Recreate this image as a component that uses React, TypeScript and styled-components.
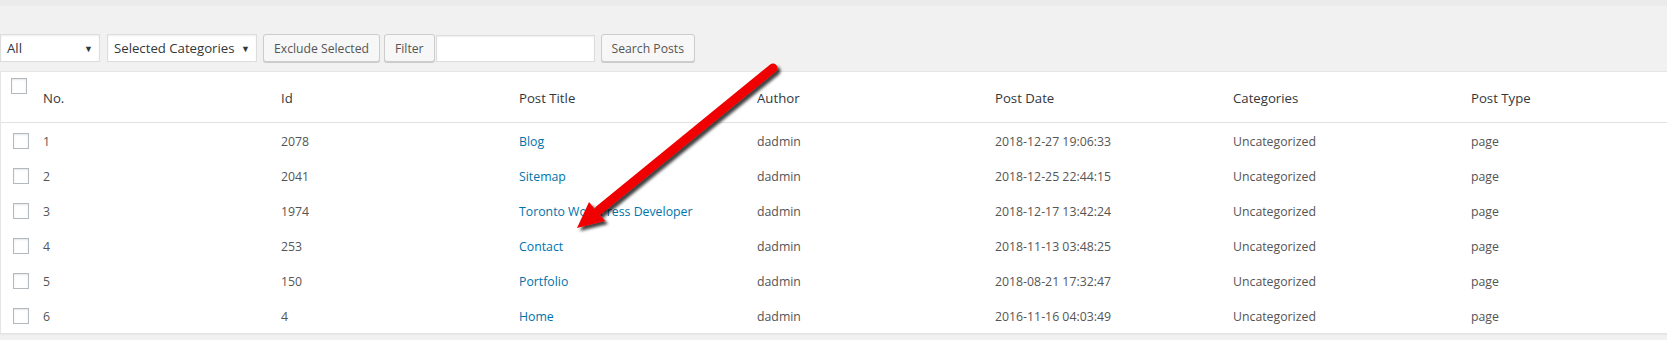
import React from 'react'
import styled, { createGlobalStyle } from 'styled-components'

const GlobalStyle = createGlobalStyle`
  body {
    margin: 0;
    background: #f1f1f1;
    font-family: "Open Sans", "Noto Sans", sans-serif;
    color: #32373c;
  }
`

interface Post {
  id: number
  title: string
  author: string
  date: string
  category: string
  type: string
}

const posts: Post[] = [
  { id: 2078, title: 'Blog', author: 'dadmin', date: '2018-12-27 19:06:33', category: 'Uncategorized', type: 'page' },
  { id: 2041, title: 'Sitemap', author: 'dadmin', date: '2018-12-25 22:44:15', category: 'Uncategorized', type: 'page' },
  { id: 1974, title: 'Toronto WordPress Developer', author: 'dadmin', date: '2018-12-17 13:42:24', category: 'Uncategorized', type: 'page' },
  { id: 253, title: 'Contact', author: 'dadmin', date: '2018-11-13 03:48:25', category: 'Uncategorized', type: 'page' },
  { id: 150, title: 'Portfolio', author: 'dadmin', date: '2018-08-21 17:32:47', category: 'Uncategorized', type: 'page' },
  { id: 4, title: 'Home', author: 'dadmin', date: '2016-11-16 04:03:49', category: 'Uncategorized', type: 'page' },
]

const columns = ['No.', 'Id', 'Post Title', 'Author', 'Post Date', 'Categories', 'Post Type']

const Arrow: React.FC = () => (
  <ArrowLayer width="1667" height="340" viewBox="0 0 1667 340">
    <defs>
      <filter id="arrowShadow" x="-20%" y="-20%" width="140%" height="140%">
        <feDropShadow dx="3" dy="3" stdDeviation="1.6" floodColor="#000" floodOpacity="0.75" />
      </filter>
    </defs>
    <g filter="url(#arrowShadow)">
      <line x1="773" y1="68" x2="599" y2="210" stroke="#f00000" strokeWidth="9" strokeLinecap="round" />
      <polygon points="577,228 605,221 589,202" fill="#f00000" />
    </g>
  </ArrowLayer>
)

const App: React.FC = () => {
  return (
    <Page>
      <GlobalStyle />
      <TopStrip />
      <Toolbar>
        <Select width={100}>
          All
          <Caret>▼</Caret>
        </Select>
        <Select width={150}>
          Selected Categories
          <Caret>▼</Caret>
        </Select>
        <Button>Exclude Selected</Button>
        <SearchGroup>
          <Button>Filter</Button>
          <SearchInput />
        </SearchGroup>
        <Button>Search Posts</Button>
      </Toolbar>
      <Table>
        <HeaderRow>
          <CheckCell header>
            <Checkbox />
          </CheckCell>
          {columns.map((c) => (
            <HeadCell key={c}>{c}</HeadCell>
          ))}
        </HeaderRow>
        {posts.map((p, index) => (
          <Row key={p.id}>
            <CheckCell>
              <Checkbox />
            </CheckCell>
            <Cell>{index + 1}</Cell>
            <Cell>{p.id}</Cell>
            <Cell>
              <TitleLink>{p.title}</TitleLink>
            </Cell>
            <Cell>{p.author}</Cell>
            <Cell>{p.date}</Cell>
            <Cell>{p.category}</Cell>
            <Cell>{p.type}</Cell>
          </Row>
        ))}
      </Table>
      <Arrow />
    </Page>
  )
}

const Page = styled.div`
  position: relative;
  width: 1667px;
  height: 340px;
  overflow: hidden;
`

const TopStrip = styled.div`
  height: 6px;
  background: #ebebeb;
`

const Toolbar = styled.div`
  display: flex;
  align-items: center;
  gap: 6px;
  margin-top: 28px;
  height: 28px;
`

const Select = styled.div<{ width: number }>`
  box-sizing: border-box;
  display: flex;
  align-items: center;
  justify-content: space-between;
  width: ${(p) => p.width}px;
  height: 28px;
  padding: 0 6px 0 6px;
  background: #fff;
  border: 1px solid #ddd;
  box-shadow: inset 0 1px 2px rgba(0, 0, 0, 0.07);
  font-size: 13.2px;
  color: #32373c;
  & + & {
    margin-left: 1px;
  }
`

const Caret = styled.span`
  font-size: 9px;
  color: #32373c;
  margin-left: 4px;
`

const Button = styled.div`
  box-sizing: border-box;
  display: flex;
  align-items: center;
  height: 28px;
  padding: 0 10px;
  background: #f7f7f7;
  border: 1px solid #ccc;
  border-radius: 3px;
  box-shadow: 0 1px 0 #ccc;
  font-size: 12.2px;
  color: #555;
`

const SearchGroup = styled.div`
  display: flex;
  align-items: center;
  gap: 1px;
  margin-left: -2px;
`

const SearchInput = styled.div`
  box-sizing: border-box;
  width: 159px;
  height: 27px;
  background: #fff;
  border: 1px solid #ddd;
  box-shadow: inset 0 1px 2px rgba(0, 0, 0, 0.07);
`

const Table = styled.div`
  margin-top: 9px;
  width: 1740px;
  background: #fff;
  border: 1px solid #e5e5e5;
  box-shadow: 0 1px 1px rgba(0, 0, 0, 0.04);
`

const HeaderRow = styled.div`
  display: grid;
  grid-template-columns: 32px repeat(7, 238px);
  height: 50px;
  border-bottom: 1px solid #e1e1e1;
`

const Row = styled.div`
  display: grid;
  grid-template-columns: 32px repeat(7, 238px);
  height: 35px;
  &:first-of-type {
    margin-top: 1px;
  }
`

const CheckCell = styled.div<{ header?: boolean }>`
  display: flex;
  align-items: ${(p) => (p.header ? 'flex-start' : 'center')};
  padding-top: ${(p) => (p.header ? '6px' : '0')};
  padding-left: ${(p) => (p.header ? '10px' : '12px')};
`

const Checkbox = styled.span`
  box-sizing: border-box;
  display: block;
  width: 16px;
  height: 16px;
  background: #fff;
  border: 1px solid #b4b9be;
  box-shadow: inset 0 1px 2px rgba(0, 0, 0, 0.1);
`

const HeadCell = styled.div`
  display: flex;
  align-items: center;
  padding-left: 10px;
  padding-top: 2px;
  font-size: 13.2px;
  color: #32373c;
`

const Cell = styled.div`
  display: flex;
  align-items: center;
  padding-left: 10px;
  padding-top: 2px;
  font-size: 12.3px;
  color: #555;
`

const TitleLink = styled.a`
  color: #0073aa;
  text-decoration: none;
`

const ArrowLayer = styled.svg`
  position: absolute;
  left: 0;
  top: 0;
  pointer-events: none;
`

export default App
